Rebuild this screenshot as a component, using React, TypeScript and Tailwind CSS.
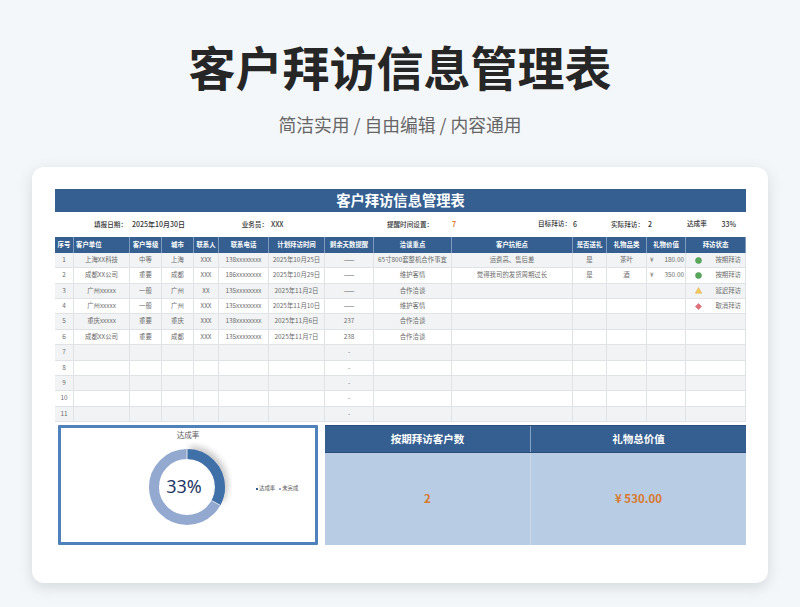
const rows: string[][] = [
  ['1', '上海XX科技', '中等', '上海', 'XXX', '138xxxxxxxx', '2025年10月25日', '——', '65寸800套整机合作事宜', '运费高、售后差', '是', '茶叶', '180.00', 'g:按期拜访'],
  ['2', '成都XX公司', '重要', '成都', 'XXX', '186xxxxxxxx', '2025年10月29日', '——', '维护客情', '觉得我司的发货周期过长', '是', '酒', '350.00', 'g:按期拜访'],
  ['3', '广州xxxxx', '一般', '广州', 'XX', '135xxxxxxxx', '2025年11月2日', '——', '合作洽谈', '', '', '', '', 'y:延迟拜访'],
  ['4', '广州xxxxx', '一般', '广州', 'XXX', '135xxxxxxxx', '2025年11月10日', '——', '维护客情', '', '', '', '', 'r:取消拜访'],
  ['5', '重庆xxxxx', '重要', '重庆', 'XXX', '138xxxxxxxx', '2025年11月6日', '237', '合作洽谈', '', '', '', '', ''],
  ['6', '成都XX公司', '重要', '成都', 'XXX', '135xxxxxxxx', '2025年11月7日', '238', '合作洽谈', '', '', '', '', ''],
  ['7', '', '', '', '', '', '', '-', '', '', '', '', '', ''],
  ['8', '', '', '', '', '', '', '-', '', '', '', '', '', ''],
  ['9', '', '', '', '', '', '', '-', '', '', '', '', '', ''],
  ['10', '', '', '', '', '', '', '-', '', '', '', '', '', ''],
  ['11', '', '', '', '', '', '', '-', '', '', '', '', '', ''],
];

const headers = ['序号', '客户单位', '客户等级', '城市', '联系人', '联系电话', '计划拜访时间', '剩余天数提醒', '洽谈重点', '客户抗拒点', '是否送礼', '礼物品类', '礼物价值', '拜访状态'];

function StatusIcon({ kind }: { kind: string }) {
  if (kind === 'g') {
    return (
      <svg width="7" height="7" viewBox="0 0 7 7">
        <circle cx="3.5" cy="3.5" r="3" fill="#5aa95a" stroke="#3f8f4a" strokeWidth="0.5" />
      </svg>
    );
  }
  if (kind === 'y') {
    return (
      <svg width="7" height="7" viewBox="0 0 7 7">
        <path d="M3.5 0.6 L6.7 6.2 L0.3 6.2 Z" fill="#f4c95d" stroke="#dfa53a" strokeWidth="0.5" />
      </svg>
    );
  }
  return (
    <svg width="7" height="7" viewBox="0 0 7 7">
      <path d="M3.5 0.4 L6.6 3.5 L3.5 6.6 L0.4 3.5 Z" fill="#e0707a" stroke="#cf5560" strokeWidth="0.5" />
    </svg>
  );
}

function Cell({ value, col, row }: { value: string; col: number; row: number }) {
  const bg = row % 2 === 0 ? 'bg-[#f1f3f4]' : 'bg-white';
  const base = `${bg} border-r border-b border-[#dfe3e6] flex items-center min-w-0 whitespace-nowrap overflow-hidden`;
  if (col === 12) {
    return (
      <div className={`${base} justify-between pl-[3px] pr-[1px]`}>
        {value ? <span>¥</span> : null}
        {value ? <span>{value}</span> : null}
      </div>
    );
  }
  if (col === 13) {
    const [kind, label] = value ? value.split(':') : ['', ''];
    return (
      <div className={`${base} justify-between pl-[9px] pr-[4px]`}>
        {kind ? <StatusIcon kind={kind} /> : null}
        {label ? <span>{label}</span> : null}
      </div>
    );
  }
  return <div className={`${base} justify-center`}>{value}</div>;
}

function Donut() {
  const r = 33;
  const c = 2 * Math.PI * r;
  return (
    <svg width="90" height="90" viewBox="0 0 90 90" className="shrink-0">
      <defs>
        <filter id="donut-shadow" x="-40%" y="-40%" width="200%" height="200%">
          <feDropShadow dx="3" dy="3" stdDeviation="3" floodColor="#000" floodOpacity="0.22" />
        </filter>
      </defs>
      <circle cx="45" cy="45" r={r} fill="none" stroke="#93a9cf" strokeWidth="10" />
      <circle
        cx="45"
        cy="45"
        r={r}
        fill="none"
        stroke="#3f6fa8"
        strokeWidth="10"
        strokeDasharray={`${c * 0.33} ${c}`}
        transform="rotate(-90 45 45)"
        filter="url(#donut-shadow)"
      />
      <path d="M45 6 V18 M69.5 58.5 L78.3 63.3" stroke="#fff" strokeWidth="0.8" />
    </svg>
  );
}

export default function App() {
  const font = { fontFamily: '"Noto Sans CJK SC", "Noto Sans", sans-serif' };
  return (
    <div style={font} className="w-[800px] h-[607px] overflow-hidden bg-[#f4f7f9] flex flex-col">
      <h1 className="mt-[28px] h-[74px] flex items-center justify-center text-[47px] leading-none font-bold text-[#262626]">
        客户拜访信息管理表
      </h1>
      <p className="mt-[9px] h-[28px] flex items-center justify-center text-[17.8px] leading-none text-[#666666]">
        简洁实用 / 自由编辑 / 内容通用
      </p>
      <div className="mt-[28px] mx-[32px] h-[416px] bg-white rounded-[12px] shadow-[0_4px_14px_rgba(90,110,125,0.22)] pt-[22px] pl-[23px] pr-[22px]">
        <div className="h-[23px] bg-[#355f91] flex items-center justify-center text-white text-[14.3px] font-bold leading-none">
          客户拜访信息管理表
        </div>

        <div className="h-[25px] grid grid-cols-[19px_56px_32px_32px_25px_50px_56px_49px_78px_121px_34px_40px_39px_60px] items-center text-[6.6px] font-medium text-[#333333] whitespace-nowrap">
          <div className="col-span-2 text-right pr-[3px]">填报日期：</div>
          <div className="col-span-3 pl-[2px] text-[7px]">2025年10月30日</div>
          <div className="text-right pr-[1px]">业务员：</div>
          <div className="pl-[2px] text-[7px]">XXX</div>
          <div />
          <div className="text-center pr-[6px]">提醒时间设置：</div>
          <div className="flex justify-between">
            <span className="font-bold text-[#d9782d] text-[7px]">7</span>
            <span className="pr-[2px]">目标拜访：</span>
          </div>
          <div className="text-[7px]">6</div>
          <div className="text-right mr-[3px]">实际拜访：</div>
          <div className="pl-[1px] text-[7px]">2</div>
          <div className="flex justify-between pl-[1px] pr-[10px]">
            <span>达成率</span>
            <span className="text-[7px]">33%</span>
          </div>
        </div>

        <div className="h-[185px] grid grid-cols-[19px_56px_32px_32px_25px_50px_56px_49px_78px_121px_34px_40px_39px_60px] grid-rows-[16px_repeat(11,1fr)] text-[6.4px] leading-none text-[#6b6b6b]">
          {headers.map((h, i) => (
            <div
              key={h}
              className={`bg-[#355f91] text-white font-bold border-r border-[#7f9cc0] flex items-center whitespace-nowrap overflow-hidden ${i === 1 ? 'justify-start pl-[2px]' : 'justify-center'}`}
            >
              {h}
            </div>
          ))}
          {rows.map((r, ri) => r.map((v, ci) => <Cell key={`${ri}-${ci}`} value={v} col={ci} row={ri} />))}
        </div>

        <div className="mt-[3px] flex h-[120px]">
          <div className="ml-[3px] w-[260px] border-[3px] border-[#4f81bd] rounded-[1px] flex flex-col items-center">
            <div className="mt-[1px] h-[12px] flex items-center text-[7.5px] text-[#595959] leading-none">达成率</div>
            <div className="relative mt-[1px] flex items-center w-full">
              <div className="ml-[81px]">
                <Donut />
              </div>
              <div
                style={{ fontFamily: '"Noto Sans", sans-serif' }}
                className="absolute left-[96px] top-[30px] w-[54px] text-center text-[18px] leading-[28px] text-[#1f3864]"
              >
                33%
              </div>
              <div className="ml-[24px] mt-[4px] flex items-center gap-[4px] text-[5.4px] leading-none text-[#595959] whitespace-nowrap">
                <span className="flex items-center gap-[1px]">
                  <span className="w-[2px] h-[2px] bg-[#355f91]" />
                  达成率
                </span>
                <span className="flex items-center gap-[1px]">
                  <span className="w-[2px] h-[2px] bg-[#93a9cf]" />
                  未完成
                </span>
              </div>
            </div>
          </div>
          <div className="ml-[7px] flex-1 flex flex-col">
            <div className="h-[28px] bg-[#355f91] border-t border-[#2b4d78] border-b flex text-white text-[10.5px] font-bold leading-none">
              <div className="w-[206px] border-r border-[#86a3c6] flex items-center justify-center">按期拜访客户数</div>
              <div className="flex-1 flex items-center justify-center">礼物总价值</div>
            </div>
            <div className="flex-1 bg-[#b8cce4] flex text-[#d9782d] text-[11.5px] font-bold leading-none">
              <div className="w-[206px] border-r border-[#cbd8ea] flex items-center justify-center">2</div>
              <div className="flex-1 flex items-center justify-center">¥ 530.00</div>
            </div>
          </div>
        </div>
      </div>
    </div>
  );
}
